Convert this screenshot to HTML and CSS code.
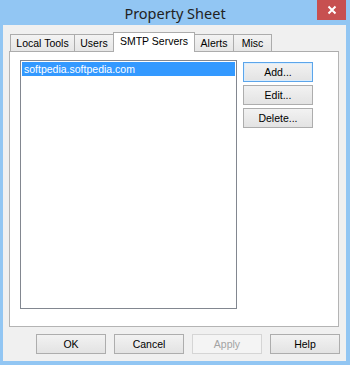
FILE: index.html
```html
<!DOCTYPE html>
<html lang="en">
<head>
    <meta charset="UTF-8">
    <title>Property Sheet</title>
    <link rel="stylesheet" href="styles.css">
</head>
<body>

    <!-- Janela -->
    <div class="window">
        <div class="titlebar">
            <span></span>
            <span class="title">Property Sheet</span>
            <span class="close">
                <svg width="10" height="10" viewBox="0 0 10 10">
                    <path d="M1.5 1.5 L8.5 8.5 M8.5 1.5 L1.5 8.5" stroke="#fff" stroke-width="2"/>
                </svg>
            </span>
        </div>

        <div class="client">
            <!-- Abas -->
            <div class="tabs">
                <div class="tab tab-local">Local Tools</div>
                <div class="tab tab-users">Users</div>
                <div class="tab tab-smtp selected">SMTP Servers</div>
                <div class="tab tab-alerts">Alerts</div>
                <div class="tab tab-misc">Misc</div>
            </div>

            <div class="panel">
                <div class="listbox">
                    <div class="item selected-item">softpedia.softpedia.com</div>
                </div>
                <div class="side-buttons">
                    <button class="btn default">Add...</button>
                    <button class="btn">Edit...</button>
                    <button class="btn">Delete...</button>
                </div>
            </div>

            <!-- Botões do rodapé -->
            <div class="footer">
                <button class="btn">OK</button>
                <button class="btn">Cancel</button>
                <button class="btn disabled">Apply</button>
                <button class="btn">Help</button>
            </div>
        </div>
    </div>

</body>
</html>
```

FILE: styles.css
```css
/* Janela estilo Windows 8 */
body {
    margin: 0;
    padding: 0;
    font-family: "Liberation Sans", Arial, sans-serif;
    font-size: 10.5px;
    background-color: #92c6f3;
}

.window {
    width: 350px;
    height: 365px;
    box-sizing: border-box;
    padding: 0 4px 4px 3px;
    background-color: #92c6f3;
    display: flex;
    flex-direction: column;
}

/* Barra de título */
.titlebar {
    height: 25px;
    display: grid;
    grid-template-columns: 1fr auto 1fr;
    align-items: start;
    margin: 0 -4px 0 -3px;
}

.title {
    font-family: "Noto Sans", "Open Sans", sans-serif;
    font-size: 14.5px;
    color: #222;
    line-height: 26px;
}

.close {
    justify-self: end;
    margin-right: 4px;
    width: 29px;
    height: 20px;
    background-color: #c75050;
    display: flex;
    align-items: center;
    justify-content: center;
}

/* Área cliente */
.client {
    flex: 1;
    background-color: #f0f0f0;
    padding: 6px 7px 0 6px;
}

/* Abas */
.tabs {
    display: flex;
    align-items: flex-end;
    height: 20px;
    margin-left: 1px;
}

.tab {
    box-sizing: border-box;
    height: 17px;
    border: 1px solid #acacac;
    border-bottom: none;
    background: linear-gradient(#f3f3f3, #e6e6e6);
    text-align: center;
    line-height: 17px;
    color: #000;
    margin-left: -1px;
}

.tab-local { width: 65px; margin-left: 0; }
.tab-users { width: 40px; }
.tab-smtp { width: 82px; }
.tab-alerts { width: 40px; }
.tab-misc { width: 39px; }

.tab.selected {
    height: 20px;
    margin-bottom: -1px;
    background: #fff;
    line-height: 17px;
    position: relative;
    z-index: 1;
}

/* Painel */
.panel {
    box-sizing: border-box;
    height: 276px;
    border: 1px solid #b4b4b4;
    border-top-color: #acacac;
    background-color: #fff;
    padding: 8px 10px;
    display: flex;
    gap: 6px;
}

.listbox {
    box-sizing: border-box;
    width: 217px;
    height: 249px;
    border: 1px solid #828790;
    padding: 1px;
}

.item {
    height: 14px;
    line-height: 14px;
    padding-left: 2px;
}

.selected-item {
    background-color: #3399ff;
    color: #fff;
}

.side-buttons {
    display: flex;
    flex-direction: column;
    gap: 3px;
    padding-top: 2px;
}

/* Botões */
.btn {
    box-sizing: border-box;
    width: 70px;
    height: 20px;
    padding: 0;
    border: 1px solid #adadad;
    background: linear-gradient(#f2f2f2, #e3e3e3);
    font-family: "Liberation Sans", Arial, sans-serif;
    font-size: 10.5px;
    color: #000;
    border-radius: 0;
}

.btn.default {
    border-color: #5ca5ea;
    box-shadow: inset 0 0 0 1px #d9ecfc;
}

.btn.disabled {
    border-color: #d5d5d5;
    background: #f4f4f4;
    color: #a3a3a3;
}

.footer {
    display: flex;
    justify-content: flex-end;
    gap: 8px;
    margin: 7px -1px 0 0;
}
```
